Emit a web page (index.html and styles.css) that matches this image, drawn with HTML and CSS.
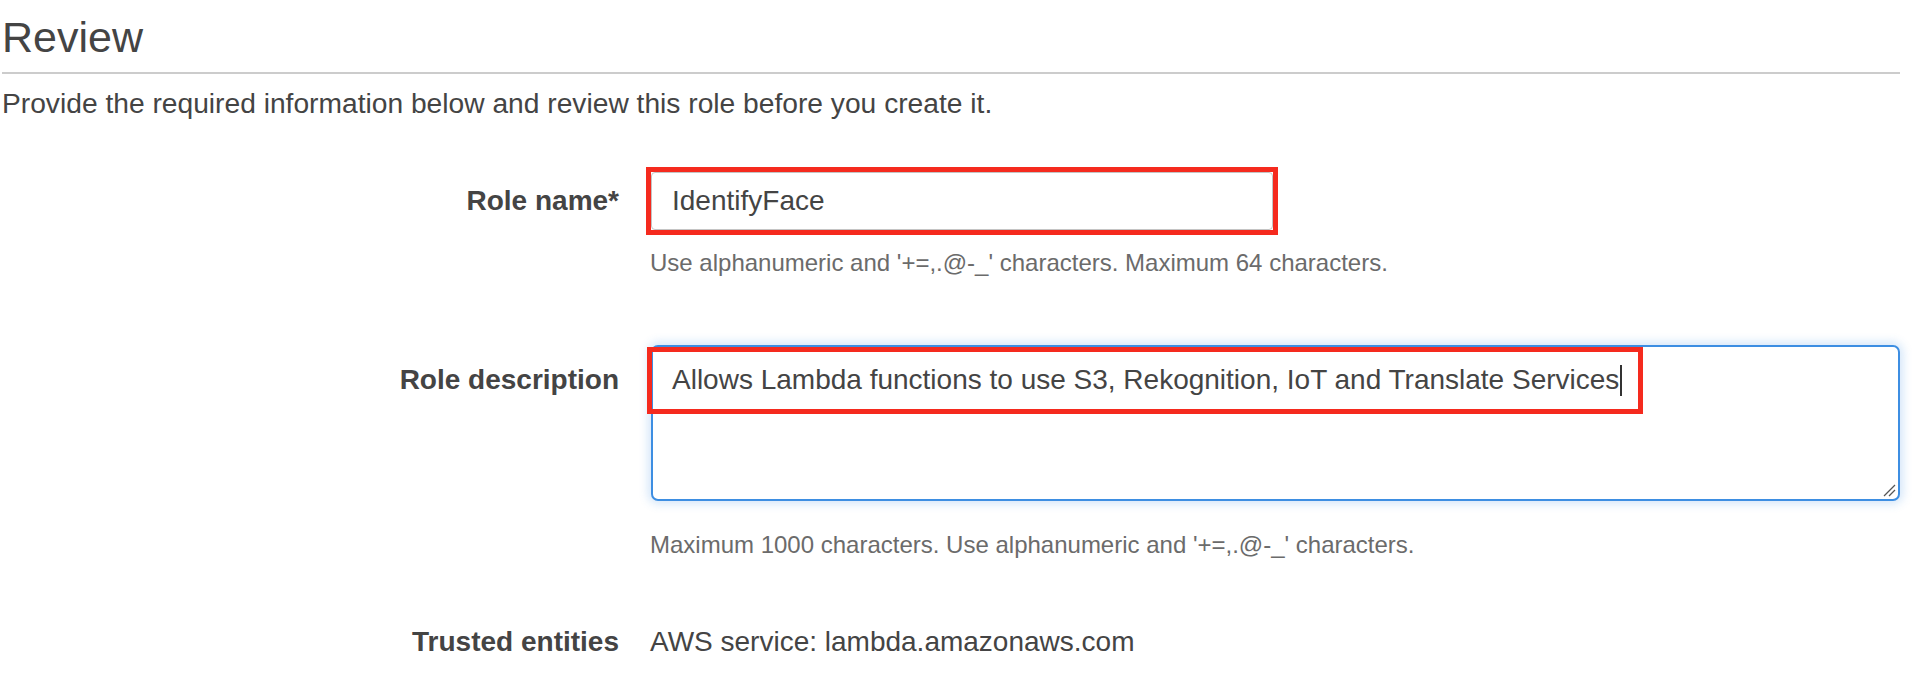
FILE: index.html
```html
<!DOCTYPE html>
<html lang="en">
<head>
<meta charset="utf-8">
<title>Review</title>
<link rel="stylesheet" href="styles.css">
</head>
<body>
<div class="page">
  <div class="header">
    <h1 class="title">Review</h1>
  </div>
  <p class="intro">Provide the required information below and review this role before you create it.</p>

  <div class="row row-name">
    <div class="label">Role name*</div>
    <div class="field">
      <div class="input-wrap">
        <input class="text-input" type="text" value="IdentifyFace">
      </div>
      <div class="help help-name">Use alphanumeric and '+=,.@-_' characters. Maximum 64 characters.</div>
    </div>
  </div>

  <div class="row row-desc">
    <div class="label">Role description</div>
    <div class="field">
      <div class="textarea">
        <span class="ta-text">Allows Lambda functions to use S3, Rekognition, IoT and Translate Services</span><span class="caret"></span>
        <div class="highlight"></div>
        <svg class="grip" width="14" height="14" viewBox="0 0 14 14">
          <line x1="2" y1="13" x2="13" y2="2" stroke="#555" stroke-width="1.2"/>
          <line x1="7" y1="13" x2="13" y2="7" stroke="#555" stroke-width="1.2"/>
        </svg>
      </div>
      <div class="help help-desc">Maximum 1000 characters. Use alphanumeric and '+=,.@-_' characters.</div>
    </div>
  </div>

  <div class="row row-trust">
    <div class="label">Trusted entities</div>
    <div class="field">
      <div class="value">AWS service: lambda.amazonaws.com</div>
    </div>
  </div>
</div>
</body>
</html>
```
FILE: styles.css
```css
html, body {
  margin: 0;
  padding: 0;
  background: #ffffff;
}

body {
  font-family: "Liberation Sans", Arial, Helvetica, sans-serif;
  color: #444444;
  width: 1922px;
  height: 684px;
  overflow: hidden;
}

.page {
  padding: 0 22px 0 2px;
}

.header {
  padding-top: 12px;
  padding-bottom: 10px;
  border-bottom: 2px solid #cccccc;
}

.title {
  margin: 0;
  font-size: 43px;
  line-height: 50px;
  font-weight: normal;
  color: #444444;
}

.intro {
  margin: 13px 0 0 0;
  font-size: 28.2px;
  line-height: 32px;
}

.row {
  display: flex;
  align-items: baseline;
}

.label {
  width: 617px;
  flex: none;
  text-align: right;
  font-weight: bold;
  font-size: 28px;
  line-height: 32px;
  color: #444444;
}

.field {
  margin-left: 31px;
  flex: 1;
  display: flex;
  flex-direction: column;
}

.row-name {
  margin-top: 53px;
}

.input-wrap {
  align-self: flex-start;
  margin-left: 1px;
  outline: 5px solid #f52a1e;
  outline-offset: 0;
}

.text-input {
  box-sizing: border-box;
  display: block;
  width: 622px;
  height: 58px;
  margin: 0;
  padding: 0 20px;
  border: 1px solid #c4c4c4;
  border-radius: 4px;
  font-family: "Liberation Sans", Arial, Helvetica, sans-serif;
  font-size: 28px;
  color: #444444;
  background: #ffffff;
  outline: none;
}

.help {
  font-size: 24px;
  line-height: 28px;
  color: #6b6b6b;
}

.help-name {
  margin-top: 19px;
}

.row-desc {
  margin-top: 68px;
}

.textarea {
  position: relative;
  box-sizing: border-box;
  margin-left: 1px;
  height: 156px;
  padding: 17px 19px;
  border: 2px solid #3d8ee2;
  border-radius: 7px;
  box-shadow: 0 0 10px 3px rgba(61, 142, 226, 0.22);
  font-size: 28px;
  line-height: 32px;
  color: #444444;
  background: #ffffff;
}

.caret {
  display: inline-block;
  width: 2px;
  height: 31px;
  margin-left: 1px;
  background: #333333;
  vertical-align: -7px;
}

.highlight {
  position: absolute;
  left: -6px;
  top: 0px;
  width: 996px;
  height: 67px;
  box-sizing: border-box;
  border: 5px solid #f52a1e;
}

.grip {
  position: absolute;
  right: 2px;
  bottom: 2px;
}

.help-desc {
  margin-top: 30px;
}

.row-trust {
  margin-top: 67px;
}

.value {
  font-size: 28px;
  line-height: 32px;
  color: #444444;
}
```
